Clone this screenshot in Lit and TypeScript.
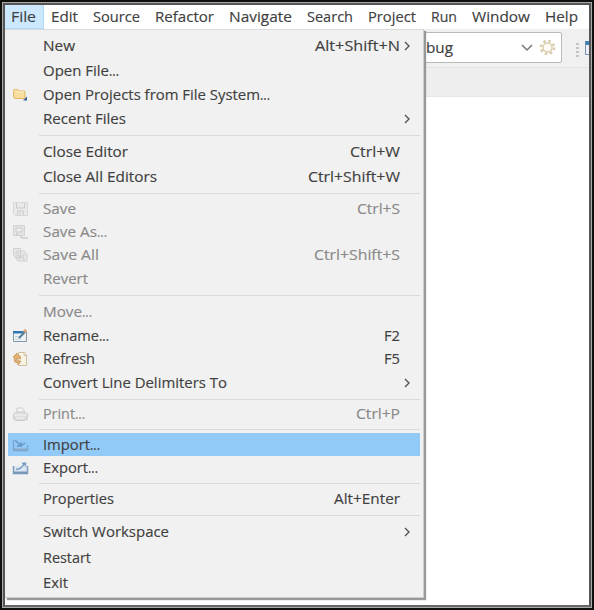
import { LitElement, html, css, svg, nothing } from "lit";
import { customElement } from "lit/decorators.js";

interface Item { label: string; h: number; keys?: string; sub?: boolean; off?: boolean; icon?: string; sel?: boolean; w: number; kw?: number; }

const groups: Item[][] = [
  [
    { label: "New", h: 25, keys: "Alt+Shift+N", sub: true, w: 32, kw: 85 },
    { label: "Open File...", h: 25, w: 76 },
    { label: "Open Projects from File System...", h: 24, icon: "folder", w: 227 },
    { label: "Recent Files", h: 24, sub: true, w: 83 },
  ],
  [
    { label: "Close Editor", h: 25, keys: "Ctrl+W", w: 85, kw: 50 },
    { label: "Close All Editors", h: 25, keys: "Ctrl+Shift+W", w: 114, kw: 92 },
  ],
  [
    { label: "Save", h: 23, keys: "Ctrl+S", off: true, icon: "save", w: 33, kw: 43 },
    { label: "Save As...", h: 23, off: true, icon: "saveAs", w: 64 },
    { label: "Save All", h: 24, keys: "Ctrl+Shift+S", off: true, icon: "saveAll", w: 56, kw: 86 },
    { label: "Revert", h: 24, off: true, w: 45 },
  ],
  [
    { label: "Move...", h: 25, off: true, w: 49 },
    { label: "Rename...", h: 23, keys: "F2", icon: "rename", w: 66, kw: 16 },
    { label: "Refresh", h: 24, keys: "F5", icon: "refresh", w: 52, kw: 16 },
    { label: "Convert Line Delimiters To", h: 24, sub: true, w: 184 },
  ],
  [{ label: "Print...", h: 22, keys: "Ctrl+P", off: true, icon: "print", w: 42, kw: 44 }],
  [
    { label: "Import...", h: 23, icon: "import", sel: true, w: 57 },
    { label: "Export...", h: 23, icon: "export", w: 55 },
  ],
  [{ label: "Properties", h: 24, keys: "Alt+Enter", w: 71, kw: 66 }],
  [
    { label: "Switch Workspace", h: 26, sub: true, w: 126 },
    { label: "Restart", h: 25, w: 48 },
    { label: "Exit", h: 25, w: 25 },
  ],
];

const bar: [string, number, number][] = [
  ["File", 11, 25], ["Edit", 51, 27], ["Source", 93, 47], ["Refactor", 155, 59], ["Navigate", 229, 63],
  ["Search", 307, 46], ["Project", 368, 48], ["Run", 431, 26], ["Window", 472, 58], ["Help", 545, 33],
];

const icons: Record<string, unknown> = {
  folder: svg`<path d="M1.5 3.5q0-1 1-1h3l1.5 1.500h5q1 0 1 1v6.500h-9q-2.500 0-2.500-2z" fill="#f8dda0" stroke="#dfb764"/><path d="M4 5h8" stroke="#fff1c8"/><path d="M11 13.500h4v-4z" fill="#37609c"/>`,
  save: svg`<path d="M1.500 1.500h14v13h-12l-2-2z" fill="#e9e9e9" stroke="#d6d6d6"/><path d="M4.500 2v5h8v-5M5.500 14v-4h6v4M8 11v3" fill="none" stroke="#cbcbcb"/>`,
  saveAs: svg`<path d="M1.500 1.500h11v10h-11z" fill="#e5e5e5" stroke="#d3d3d3"/><path d="M4 4h6v4H4z" fill="#eee" stroke="#c9c9c9"/><path d="M5 9v3M8 12l2 2h6" fill="none" stroke="#cbcbcb" stroke-width="1.500"/>`,
  saveAll: svg`<path d="M1.500 1.500h7v9h-5l-2-2zM4 4h8l3 3v7H6l-2-2z" fill="#e9e9e9" stroke="#d0d0d0"/><path d="M6 5v4h6V6M7 13v-2h5v3" fill="none" stroke="#cbcbcb"/>`,
  rename: svg`<path d="M1.500 3.500h13v10h-13z" fill="#edf2f5" stroke="#8199a9"/><path d="M1 3h10v2.500H1z" fill="#2f79b5"/><path d="M3 8.500h4M3 11h6" stroke="#bdd0dc"/><path d="M7 10l6-6" stroke="#577f94" stroke-width="2"/><path d="M12 4l2-2" stroke="#dc9c70" stroke-width="3"/>`,
  refresh: svg`<path d="M6.500 1.500h6l2 2v11h-8z" fill="#f8f3e5" stroke="#cfc19e"/><path d="M12 1.500v3h3" fill="none" stroke="#cfc19e"/><path d="M1 6l4-4v2q4 0 3.500 4L6 7H5v2zM9 10l-3 4v-2q-4 0-4-4l3 2h4z" fill="#e7b36f" stroke="#c98f54" stroke-width=".8"/>`,
  print: svg`<path d="M5 6V2h5l2 2v3" fill="#f3f3f3" stroke="#ccc"/><path d="M1.500 8l3-2h8l3 2v5l-3 1.500h-9l-2-1.500z" fill="#dedede" stroke="#cacaca"/><path d="M2 9h13M4 12h8" stroke="#f4f4f4"/>`,
  import: svg`<path d="M1.500 3v10.500h14V8" fill="none" stroke="#79a5ce" stroke-width="1.300"/><path d="M3 3l6 6 4-3M9 5v4H5" fill="none" stroke="#6595c4" stroke-width="1.300"/><path d="M2 12.500h13" stroke="#8aa9c7" stroke-width="2"/>`,
  export: svg`<path d="M1.500 6v7.500h14V6" fill="#dde7f1" stroke="#7d9dc0" stroke-width="1.500"/><path d="M4 9.500l4-1 5-5M10 3.500l3.500-.5v3.500" fill="none" stroke="#7ba0c3" stroke-width="1.500"/><path d="M2 12.500h13" stroke="#7695b7" stroke-width="2"/>`,
};

@customElement("fit-text")
class FitText extends LitElement {
  static properties = { text: {}, width: { type: Number } };
  declare text: string;
  declare width: number;
  static styles = css`
    :host { display: inline-block; height: 22px; flex: none; }
    svg { display: block; overflow: visible; height: 22px; }
    text { font: 15px "Open Sans", "Noto Sans", sans-serif; fill: currentColor; stroke: currentColor; stroke-width: .15px; }
  `;
  render() {
    const dots = this.text.endsWith("...");
    const word = dots ? this.text.slice(0, -3) : this.text;
    const wordWidth = this.width - (dots ? 10 : 0);
    return html`<svg width=${this.width}><text x="0" y="16"><tspan textLength=${wordWidth} lengthAdjust="spacingAndGlyphs">${word}</tspan>${dots ? svg`<tspan textLength="10" lengthAdjust="spacingAndGlyphs">...</tspan>` : nothing}</text></svg>`;
  }
}

@customElement("app-root")
class AppRoot extends LitElement {
  static styles = css`
    * { box-sizing: border-box; }
    :host { box-sizing: border-box; display: block; position: relative; width: 594px; height: 610px; overflow: hidden; background: #fff;
      border: 2px solid #10100f; color: #404040; }
    .inner { height: 606px; border: 1px solid #aaa; }
    .frame { height: 604px; border: 2px solid #555; border-bottom-color: #666; overflow: hidden; }
    .bar { display: flex; height: 24px; background: #fff; }
    .tab { flex: none; height: 24px; padding-top: 1px; }
    .tab.on { background: #cce8ff; box-shadow: inset -1px -1px #b0dcfb; }
    .tools { height: 38px; background: #f0f0f0; display: flex; justify-content: flex-end; padding-top: 3px; }
    .combo { width: 146px; height: 31px; border: 1px solid #b9b9b9; border-radius: 2px; background: #fff; display: flex; align-items: center; padding-left: 9px; }
    .combo svg { flex: none; }
    .gear { margin: 0 5px 0 6px; }
    .gap { flex: 1; }
    .grip { margin: 11px 6px 0 14px; width: 3px; height: 14px; background: repeating-linear-gradient(#c4c4c4 0 2px, transparent 2px 4px); }
    .clip { width: 4px; height: 14px; margin-top: 9px; border: 1px solid #7798af; border-top: 4px solid #3b82b7; border-right: 0; background: #eef; }
    .strip { height: 30px; background: #eee; border-top: 1px solid #e4e4e4; border-bottom: 1px solid #e6e6e6; }
    .menu { position: absolute; left: 3px; top: 27px; width: 419px; height: 569px; background: #f1f1f1; border-top: 1px solid #d9d9d9;
      border-right: 1px solid #ccc; border-bottom: 1px solid #ccc; box-shadow: 2px 2px 1px #999; padding: 3px 3px 0 3px; }
    .item { display: flex; align-items: center; }
    .item.off { color: #898989; }
    .item.sel { background: #91c9f7; }
    .ico { width: 17px; height: 16px; margin: 0 14px 0 4px; flex: none; }
    .ico svg { display: block; filter: blur(.4px); }
    .end { width: 20px; display: flex; justify-content: flex-start; padding-left: 4px; }
    .sep { height: 8px; display: flex; align-items: center; padding-left: 31px; }
    .sep::after { content: ""; height: 1px; flex: 1; background: #dadada; }
  `;
  render() {
    return html`
      <div class="inner"><div class="frame">
        <div class="bar">${bar.map(([t, x, w], i) => {
          const left = i ? (bar[i - 1][1] + bar[i - 1][2] + x) / 2 : 5;
          const right = i < 9 ? (x + w + bar[i + 1][1]) / 2 : 589;
          return html`<div class="tab ${i ? "" : "on"}" style="width:${right - left}px;padding-left:${x - left}px"><fit-text .text=${t} .width=${w}></fit-text></div>`;
        })}</div>
        <div class="tools">
          <div class="combo"><fit-text .text=${"bug"} .width=${27}></fit-text><span class="gap"></span>
            <svg width="12" height="8"><path d="M1 1l5 5 5-5" fill="none" stroke="#777" stroke-width="1.500"/></svg>
            <svg class="gear" width="17" height="17" viewBox="0 0 17 17"><circle cx="8.500" cy="8.500" r="4.500" fill="#fffdf5" stroke="#d9d0b0" stroke-width="1.500"/><circle cx="8.500" cy="8.500" r="6.500" fill="none" stroke="#d6ccab" stroke-width="2.500" stroke-dasharray="2.500 2.605"/></svg>
          </div>
          <div class="grip"></div><div class="clip"></div>
        </div>
        <div class="strip"></div>
      </div></div>
      <div class="menu">${groups.map((g, i) => html`
        ${i ? html`<div class="sep"></div>` : nothing}
        ${g.map((m) => html`<div class="item ${m.off ? "off" : ""} ${m.sel ? "sel" : ""}" style="height:${m.h}px">
          <div class="ico">${m.icon ? html`<svg width="17" height="16" viewBox="0 0 17 16">${icons[m.icon]}</svg>` : nothing}</div>
          <fit-text .text=${m.label} .width=${m.w}></fit-text><span class="gap"></span>
          ${m.keys ? html`<fit-text .text=${m.keys} .width=${m.kw}></fit-text>` : nothing}
          <div class="end">${m.sub ? html`<svg width="8" height="10"><path d="M1 1l4 4-4 4" fill="none" stroke="#555" stroke-width="1.400"/></svg>` : nothing}</div>
        </div>`)}`)}
      </div>`;
  }
}
